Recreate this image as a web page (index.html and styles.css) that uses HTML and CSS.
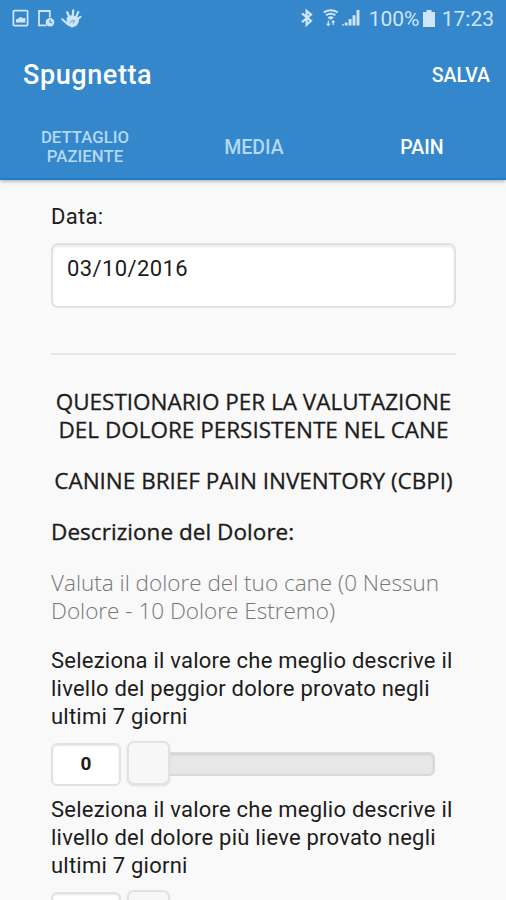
FILE: index.html
```html
<!DOCTYPE html>
<html lang="it">
<head>
<meta charset="utf-8">
<title>Spugnetta</title>
<link rel="stylesheet" href="styles.css">
</head>
<body>
<header class="header">
  <div class="status">
    <svg class="status-left" width="78" height="24" viewBox="0 0 78 24" fill="none" stroke="currentColor">
      <rect x="8.4" y="3.6" width="14.2" height="15" rx="1" stroke-width="1.8"/>
      <path d="M11 15.5v-3l2.4-1 2.2-1.7 2.4 1.5 2.3-.4v4.6z" fill="currentColor" stroke="none"/>
      <path d="M41.5 18.3H34V4h10.8v6.5" stroke-width="1.8"/>
      <circle cx="45" cy="15.3" r="4.3" fill="currentColor" stroke="none"/>
      <path d="M45 12.7v3h2.3" stroke="#3487cb" stroke-width="1"/>
      <path d="m62 10.8 .5 7 4.5 2.3 4.5-1.8 2-4-1.5-4.5-6-1z" fill="currentColor" stroke-width="1"/>
      <path d="M57.8 12.3 63 17M62.7 5.2l3 7M68.7 3.3 68 12M73.7 5.1 70.2 13M76 9.8l-5.5 4.9" transform="translate(-.5 0)" stroke-width="2.2" stroke-linecap="round"/>
      <path d="m64.5 16 2.8-2.5 2.5.5-2 2.2" stroke="#3487cb" stroke-width=".8"/>
    </svg>
    <svg class="status-right" width="62" height="24" viewBox="0 0 62 24" fill="none" stroke="currentColor">
      <path d="m1 6.4 9 7.4-4.4 3.9V3.9L10 7.6l-9 7.5" stroke-width="2.2"/>
      <path d="M22.7 5.3q7-4 14 0M25 8.2q4.7-3 9.4 0M27.2 11q2.5-1.5 5 0" stroke-width="2"/>
      <path d="m29.7 12.5-1.5-2h3z" fill="currentColor"/>
      <path d="M27.3 13.5v5m-1.6-1.8 1.6 1.8 1.6-1.8M32.2 18v-4m-1.5 1.3 1.5-1.5 1.5 1.5" stroke-width="1.2"/>
      <path d="M45.2 15.5v3M49.1 12v6.5M53 8.2v10.3M57 3v15.5" stroke-width="2.9"/>
      <path d="M42 17.2v1.3" stroke-width="2"/>
    </svg>
    <span class="percent">100%</span>
    <svg class="battery" width="12" height="18" viewBox="0 0 12 18" fill="currentColor"><path d="M3.5 0h5v2H12v15H0V2h3.5z"/></svg>
    <span class="time">17:23</span>
  </div>
  <div class="titlebar">
    <h1 class="title">Spugnetta</h1>
    <span class="save">SALVA</span>
  </div>
  <nav class="tabs">
    <span class="tab tab-small">DETTAGLIO<br>PAZIENTE</span>
    <span class="tab">MEDIA</span>
    <span class="tab tab-active">PAIN</span>
  </nav>
</header>
<main class="form">
  <label class="label">Data:</label>
  <div class="field">03/10/2016</div>
  <hr class="rule">
  <h2 class="heading">QUESTIONARIO PER LA VALUTAZIONE<br>DEL DOLORE PERSISTENTE NEL CANE</h2>
  <h2 class="heading">CANINE BRIEF PAIN INVENTORY (CBPI)</h2>
  <h3 class="subheading">Descrizione del Dolore:</h3>
  <p class="hint">Valuta il dolore del tuo cane (0 Nessun<br>Dolore - 10 Dolore Estremo)</p>
  <p class="question">Seleziona il valore che meglio descrive il<br>livello del peggior dolore provato negli<br>ultimi 7 giorni</p>
  <div class="slider">
    <div class="value">0</div>
    <div class="thumb"></div>
    <div class="track"></div>
  </div>
  <p class="question">Seleziona il valore che meglio descrive il<br>livello del dolore più lieve provato negli<br>ultimi 7 giorni</p>
  <div class="slider">
    <div class="value"></div>
    <div class="thumb"></div>
    <div class="track"></div>
  </div>
</main>
</body>
</html>
```
FILE: styles.css
```css
* { box-sizing: border-box; }
body {
  display: flex;
  flex-direction: column;
  height: 900px;
  margin: 0;
  overflow: hidden;
  background: #f9f9f9;
  color: #1c1c1c;
  font-family: Roboto, sans-serif;
  white-space: nowrap;
}
h1, h2, h3, p { margin: 0; }
.header {
  position: relative;
  flex: none;
  height: 180px;
  background: #3487cb;
  border-bottom: 2px solid #217ec8;
  box-shadow: 0 1px 4px rgba(0, 0, 0, .35);
  color: #fff;
}
.status {
  display: flex;
  align-items: center;
  height: 37px;
  padding: 0 12px 0 6px;
  color: #cfe5f8;
  font-size: 21px;
}
.status svg { flex: none; }
.status-left { margin-left: -1px; }
.status-right { margin-left: auto; }
.percent { margin-left: 6px; width: 52px; }
.battery { margin: 0 7px 0 2px; }
.titlebar {
  display: flex;
  align-items: center;
  justify-content: space-between;
  height: 76px;
  padding: 0 16px 0 23px;
}
.title { font-size: 27px; font-weight: 500; letter-spacing: .6px; }
.save { font-size: 19.5px; font-weight: 500; }
.tabs {
  display: grid;
  grid-template-columns: 170px 1fr 168px;
  align-items: center;
  height: 67px;
  text-align: center;
}
.tab { padding-top: 2px; color: #b3d8f5; font-size: 19.5px; font-weight: 500; }
.tab-small { padding-top: 0; font-size: 16.8px; line-height: 19px; }
.tab-active { color: #fff; }
.form {
  flex: 1;
  min-height: 0;
  padding: 23px 50px 0 51px;
  overflow: hidden;
}
.label { display: block; font-size: 22px; line-height: 28px; letter-spacing: .3px; }
.field {
  height: 65px;
  margin-top: 12px;
  padding: 11px 14px;
  border: 2px solid #e2e2e2;
  border-radius: 7px;
  background: #fff;
  box-shadow: inset 0 2px 2px #ececec;
  font-size: 22px;
  line-height: 26px;
  letter-spacing: .4px;
}
.rule { height: 2px; margin: 45px 0 33px; border: 0; background: #e7e7e7; }
.heading, .subheading, .hint { font-family: "Open Sans", sans-serif; font-size: 22.5px; line-height: 28px; }
.heading { margin: 0 -5px 23px; font-weight: 400; text-align: center; -webkit-text-stroke: .3px; }
.subheading { margin-bottom: 23px; font-weight: 400; letter-spacing: .05px; -webkit-text-stroke: .35px; }
.hint { margin-bottom: 22px; color: #777; font-weight: 300; }
.question { font-size: 22px; line-height: 28px; letter-spacing: .23px; }
.slider { display: flex; align-items: center; height: 46px; margin: 10px 0 9px; }
.value {
  width: 70px;
  height: 43px;
  border: 2px solid #e2e2e2;
  border-radius: 6px;
  background: #fff;
  box-shadow: inset 0 1px 2px #e8e8e8;
  font-size: 19px;
  font-weight: 700;
  line-height: 37px;
  text-align: center;
}
.thumb {
  z-index: 1;
  width: 43px;
  height: 44px;
  margin: -2px 0 0 6px;
  border: 2px solid #e2e2e2;
  border-radius: 7px;
  background: #f7f7f7;
  box-shadow: 0 1px 2px #ddd;
}
.track {
  width: 268px;
  height: 24px;
  margin: -1px 0 0 -3px;
  border: 2px solid #d9d9d9;
  border-radius: 0 6px 6px 0;
  background: #e7e7e7;
  box-shadow: inset 0 1px 2px #ccc;
}
```
